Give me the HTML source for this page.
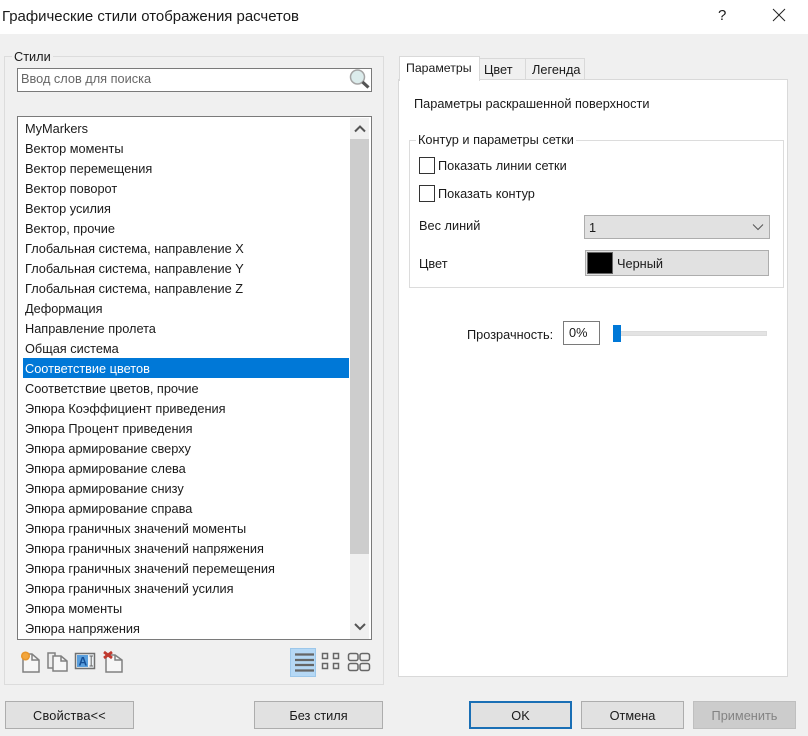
<!DOCTYPE html>
<html><head><meta charset="utf-8">
<style>
html,body{margin:0;padding:0}
body{width:808px;height:736px;position:relative;overflow:hidden;background:#f0f0f0;font-family:"Liberation Sans",sans-serif;font-size:12.75px;color:#1a1a1a}
.a{position:absolute;box-sizing:border-box}
.t{position:absolute;white-space:nowrap;line-height:16px;height:16px}
.btn{position:absolute;box-sizing:border-box;background:#e1e1e1;border:1px solid #adadad;top:701px;height:28px;text-align:center;line-height:27px}
#list div{position:absolute;left:7px;white-space:nowrap;line-height:20px;height:20px}
</style></head><body>
<div class="a" style="left:0;top:0;width:808px;height:34px;background:#fff"></div>
<div class="t" style="left:2px;top:8px;font-size:14.950px;line-height:17px;height:17px">Графические стили отображения расчетов</div>
<div class="t" style="left:718px;top:8px;font-size:15px">?</div>
<svg class="a" style="left:772px;top:8px" width="14" height="14"><path d="M1 1L13 13M13 1L1 13" stroke="#222" stroke-width="1" fill="none"/></svg>

<div class="a" style="left:4px;top:56px;width:380px;height:629px;border:1px solid #dcdcdc"></div>
<div class="t" style="left:12px;top:49px;background:#f0f0f0;padding:0 2px">Стили</div>
<div class="a" style="left:17px;top:68px;width:355px;height:24px;background:#fff;border:1px solid #7a7a7a"></div>
<div class="t" style="left:21px;top:71px;color:#666">Ввод слов для поиска</div>
<svg class="a" style="left:349px;top:69px" width="22" height="22"><circle cx="8.500" cy="8" r="7" fill="#dcecec" stroke="#a5a5a5" stroke-width="1.500"/><path d="M13.500 13L19.500 18.500" stroke="#555" stroke-width="3.200"/></svg>

<div class="a" id="list" style="left:17px;top:116px;width:355px;height:524px;background:#fff;border:1px solid #7a7a7a;overflow:hidden">
<div style="top:2px">MyMarkers</div>
<div style="top:22px">Вектор моменты</div>
<div style="top:42px">Вектор перемещения</div>
<div style="top:62px">Вектор поворот</div>
<div style="top:82px">Вектор усилия</div>
<div style="top:102px">Вектор, прочие</div>
<div style="top:122px">Глобальная система, направление X</div>
<div style="top:142px">Глобальная система, направление Y</div>
<div style="top:162px">Глобальная система, направление Z</div>
<div style="top:182px">Деформация</div>
<div style="top:202px">Направление пролета</div>
<div style="top:222px">Общая система</div>
<div style="top:241px;left:5px;width:326px;height:20px;background:#0078d7"></div>
<div style="top:242px;color:#fff">Соответствие цветов</div>
<div style="top:262px">Соответствие цветов, прочие</div>
<div style="top:282px">Эпюра Коэффициент приведения</div>
<div style="top:302px">Эпюра Процент приведения</div>
<div style="top:322px">Эпюра армирование сверху</div>
<div style="top:342px">Эпюра армирование слева</div>
<div style="top:362px">Эпюра армирование снизу</div>
<div style="top:382px">Эпюра армирование справа</div>
<div style="top:402px">Эпюра граничных значений моменты</div>
<div style="top:422px">Эпюра граничных значений напряжения</div>
<div style="top:442px">Эпюра граничных значений перемещения</div>
<div style="top:462px">Эпюра граничных значений усилия</div>
<div style="top:482px">Эпюра моменты</div>
<div style="top:502px">Эпюра напряжения</div>
</div>
<div class="a" style="left:350px;top:118px;width:19px;height:521px;background:#f0f0f0"></div>
<div class="a" style="left:350px;top:139px;width:19px;height:415px;background:#cdcdcd"></div>
<svg class="a" style="left:350px;top:118px" width="19" height="20"><path d="M5 13.500L10 8.500L15 13.500" stroke="#555" stroke-width="2" fill="none"/></svg>
<svg class="a" style="left:350px;top:617px" width="19" height="20"><path d="M5 7L10 12L15 7" stroke="#555" stroke-width="2" fill="none"/></svg>

<svg class="a" style="left:18px;top:648px" width="112" height="26" fill="#fff" stroke="#808080" stroke-width="1.500">
<path d="M5 6H14L21 12V24H5Z" fill="#f6f6f6"/><path d="M14 6V12H21" fill="none"/><circle cx="7.500" cy="8" r="3.800" fill="#f3a63c" stroke="#e8952a"/>
<path d="M30 5H37V20H30Z" fill="#eee"/><path d="M35 8H43L49 13V23H35Z" fill="#f6f6f6"/><path d="M43 8V13H49" fill="none"/>
<rect x="57.500" y="5.500" width="19" height="15" fill="#eef2f6" stroke="#707070"/><rect x="59" y="7" width="11" height="12" fill="#5a9fdd" stroke="none"/>
<text x="60.500" y="17.500" font-family="Liberation Sans" font-weight="bold" font-size="12" fill="#154f96" stroke="none">A</text>
<path d="M71.500 8H75M73.200 8V18M71.500 18H75" fill="none" stroke="#666" stroke-width="1"/>
<path d="M88 7H97L104 12V24H88Z" fill="#f6f6f6"/><path d="M97 7V12H104" fill="none"/><path d="M86 4L94 10M94 4L86 10" stroke="#c0392f" stroke-width="2.800"/>
</svg>
<div class="a" style="left:290px;top:648px;width:26px;height:29px;background:#b5d8f5;border:1px solid #9cc7ea"></div>
<svg class="a" style="left:290px;top:648px" width="90" height="29" fill="none" stroke="#666">
<path d="M5 6.500H24M5 12H24M5 17H24M5 22.500H24" stroke-width="2.200"/>
<rect x="32.500" y="5.500" width="5" height="5" stroke-width="1.500"/><rect x="43.500" y="5.500" width="5" height="5" stroke-width="1.500"/><rect x="32.500" y="15.500" width="5" height="5" stroke-width="1.500"/><rect x="43.500" y="15.500" width="5" height="5" stroke-width="1.500"/>
<rect x="58.500" y="5.500" width="9.500" height="7" rx="2" stroke-width="1.500"/><rect x="70" y="5.500" width="9.500" height="7" rx="2" stroke-width="1.500"/><rect x="58.500" y="15.500" width="9.500" height="7" rx="2" stroke-width="1.500"/><rect x="70" y="15.500" width="9.500" height="7" rx="2" stroke-width="1.500"/>
</svg>

<div class="a" style="left:398px;top:79px;width:390px;height:598px;background:#fff;border:1px solid #d9d9d9"></div>
<div class="a" style="left:479px;top:58px;width:47px;height:22px;background:#f0f0f0;border:1px solid #d9d9d9"></div>
<div class="a" style="left:525px;top:58px;width:60px;height:22px;background:#f0f0f0;border:1px solid #d9d9d9"></div>
<div class="a" style="left:399px;top:56px;width:81px;height:25px;background:#fff;border:1px solid #d9d9d9;border-bottom:0"></div>
<div class="t" style="left:406px;top:60px;font-size:12.300px">Параметры</div>
<div class="t" style="left:484px;top:62px">Цвет</div>
<div class="t" style="left:532px;top:62px">Легенда</div>
<div class="t" style="left:414px;top:96px">Параметры раскрашенной поверхности</div>

<div class="a" style="left:409px;top:140px;width:375px;height:148px;border:1px solid #dcdcdc"></div>
<div class="t" style="left:416px;top:132px;background:#fff;padding:0 2px">Контур и параметры сетки</div>
<div class="a" style="left:419px;top:157px;width:16px;height:17px;background:#fff;border:1px solid #333"></div>
<div class="t" style="left:438px;top:158px">Показать линии сетки</div>
<div class="a" style="left:419px;top:185px;width:16px;height:17px;background:#fff;border:1px solid #333"></div>
<div class="t" style="left:438px;top:186px">Показать контур</div>
<div class="t" style="left:419px;top:218px">Вес линий</div>
<div class="a" style="left:584px;top:215px;width:186px;height:24px;background:#e1e1e1;border:1px solid #adadad"></div>
<div class="t" style="left:589px;top:220px">1</div>
<svg class="a" style="left:752px;top:222px" width="12" height="10"><path d="M1 2.500L6 7.500L11 2.500" stroke="#555" fill="none"/></svg>
<div class="t" style="left:419px;top:256px">Цвет</div>
<div class="a" style="left:585px;top:250px;width:184px;height:26px;background:#e1e1e1;border:1px solid #adadad"></div>
<div class="a" style="left:587px;top:252px;width:26px;height:22px;background:#000;border:1px solid #666"></div>
<div class="t" style="left:617px;top:256px">Черный</div>
<div class="t" style="left:467px;top:327px">Прозрачность:</div>
<div class="a" style="left:563px;top:321px;width:37px;height:24px;background:#fff;border:1px solid #7a7a7a"></div>
<div class="t" style="left:569px;top:325px">0%</div>
<div class="a" style="left:613px;top:331px;width:154px;height:5px;background:#e3e3e3;border:1px solid #dcdcdc"></div>
<div class="a" style="left:613px;top:325px;width:8px;height:17px;background:#0078d7"></div>

<div class="btn" style="left:5px;width:129px;letter-spacing:.2px">Свойства&lt;&lt;</div>
<div class="btn" style="left:254px;width:129px">Без стиля</div>
<div class="btn" style="left:469px;width:103px;border:2px solid #1a6fb5;line-height:25px">OK</div>
<div class="btn" style="left:581px;width:103px">Отмена</div>
<div class="btn" style="left:693px;width:103px;background:#cccccc;border-color:#bfbfbf;color:#838383">Применить</div>
</body></html>
